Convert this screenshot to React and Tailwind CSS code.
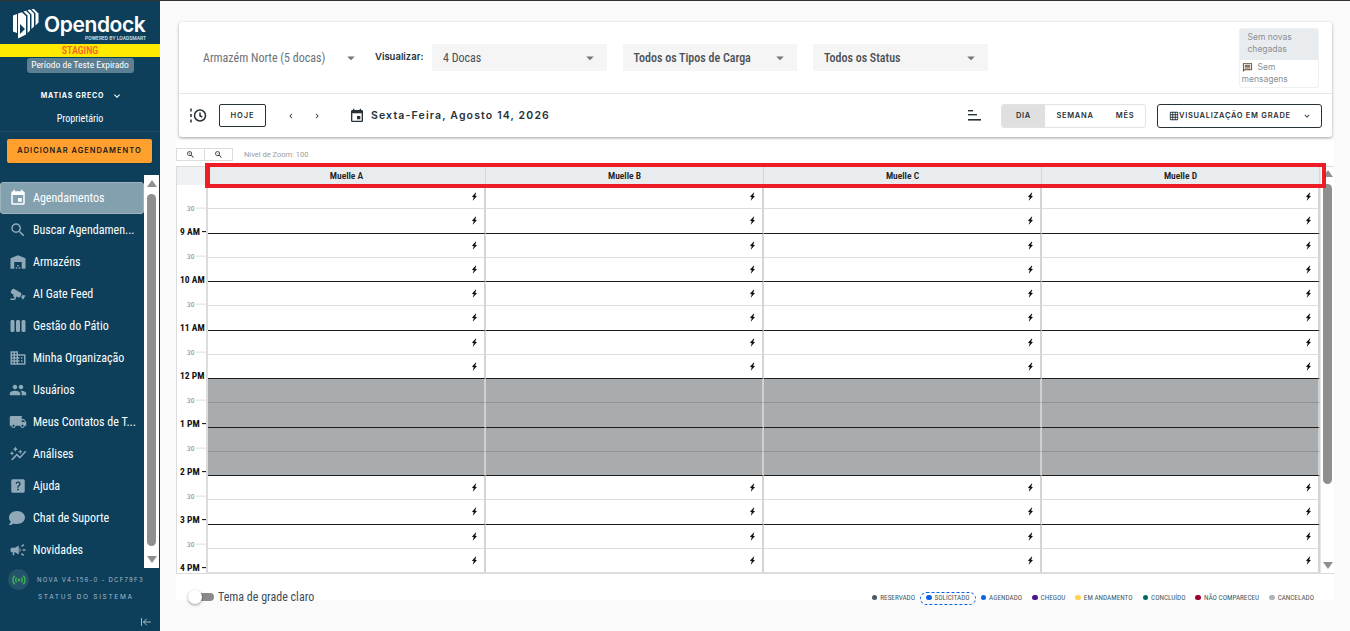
import React from 'react';
import {
  MdEvent, MdSearch, MdWarehouse, MdViewWeek, MdDomain, MdPeople, MdLocalShipping, MdAutoGraph,
  MdHelpCenter, MdCampaign, MdSensors, MdBolt, MdArrowDropDown, MdExpandMore,
  MdChevronLeft, MdChevronRight, MdOutlineMessage, MdGridOn, MdZoomIn, MdZoomOut,
} from 'react-icons/md';
import { FaComment } from 'react-icons/fa';
import { ArrowLeftToLine } from 'lucide-react';

const CctvIcon = ({ size = 20, className = '' }) => (
  <svg width={size} height={size} viewBox="0 0 24 24" fill="currentColor" className={className}>
    <path d="M18.15,4.94C17.77,4.91 17.37,5 17,5.2L8.35,10.2C7.39,10.76 7.07,12 7.62,12.94L9.12,15.53C9.67,16.5 10.89,16.82 11.85,16.27L13.65,15.23C13.92,15.69 14.32,16.06 14.81,16.27V18.04C14.81,19.13 15.7,20 16.81,20H22V18.04H16.81V16.27C17.72,15.87 18.31,14.97 18.31,14C18.31,13.54 18.19,13.11 17.97,12.73L20.65,11.19C21.6,10.64 21.93,9.42 21.38,8.46L19.88,5.87C19.5,5.25 18.85,4.97 18.15,4.94M6.22,13.17L2,13.89L2.75,15.19L4.5,18.22L5.25,19.5L7.97,16.25L6.22,13.17Z" />
  </svg>
);

const HistoryIcon = () => (
  <svg width="17" height="17" viewBox="0 0 17 17" fill="none" stroke="#263238" strokeWidth="1.5">
    <path d="M1 1.5V4.5M1 7V10M1 12.5V15.5" />
    <circle cx="10" cy="8.5" r="5.5" />
    <path d="M10 5.5V8.7L12.2 10" />
  </svg>
);

const Logo = () => (
  <svg width="26" height="30" viewBox="0 0 26 30" fill="white" className="shrink-0">
    <path d="M0 6.5 L4 5 V24 L0 22.5 Z" />
    <path d="M5 4.6 L9 3.2 L13 7.2 V25.5 L5 29.5 Z M7 15 V25 L12 20 Z" fillRule="evenodd" />
    <path d="M10.5 2.6 L13 1.8 L17 5.8 V21.5 L14.5 24 V6.6 Z" />
    <path d="M14.5 1.3 L17 0.5 L21 4.5 V17.5 L18.5 20 V5.4 Z" />
    <path d="M18.5 0.2 L21 0 L25.5 4.5 V13.5 L22.5 16.5 V4.2 Z" />
  </svg>
);

const menuItems = [
  { label: 'Agendamentos', icon: MdEvent, active: true },
  { label: 'Buscar Agendamen...', icon: MdSearch },
  { label: 'Armazéns', icon: MdWarehouse },
  { label: 'AI Gate Feed', icon: CctvIcon, flip: true },
  { label: 'Gestão do Pátio', icon: MdViewWeek },
  { label: 'Minha Organização', icon: MdDomain },
  { label: 'Usuários', icon: MdPeople },
  { label: 'Meus Contatos de T...', icon: MdLocalShipping },
  { label: 'Análises', icon: MdAutoGraph },
  { label: 'Ajuda', icon: MdHelpCenter },
  { label: 'Chat de Suporte', icon: FaComment },
  { label: 'Novidades', icon: MdCampaign },
];

const legend = [
  ['RESERVADO', 'bg-[#455a64]'],
  ['SOLICITADO', 'bg-[#0b63e5]'],
  ['AGENDADO', 'bg-[#0b63e5]'],
  ['CHEGOU', 'bg-[#4a148c]'],
  ['EM ANDAMENTO', 'bg-[#ffd54f]'],
  ['CONCLUÍDO', 'bg-[#00695c]'],
  ['NÃO COMPARECEU', 'bg-[#a00030]'],
  ['CANCELADO', 'bg-[#b0b3b8]'],
];

const docks = ['Muelle A', 'Muelle B', 'Muelle C', 'Muelle D'];

const rows = ['30', '9 AM', '30', '10 AM', '30', '11 AM', '30', '12 PM', '30', '1 PM', '30', '2 PM', '30', '3 PM', '30', '4 PM'];

const Select = ({ label, bold }) => (
  <div className={`flex items-center justify-between w-[174.5px] h-[27px] bg-[#f5f5f5] pl-[11px] pr-[8px] text-[12px] text-[#4a4f55] whitespace-nowrap font-stretch-condensed ${bold ? 'font-medium' : ''}`}>
    <span>{label}</span>
    <MdArrowDropDown size={18} className="text-[#757575]" />
  </div>
);

const Sidebar = () => (
  <aside className="w-[160px] shrink-0 bg-[#0d3f5b] flex flex-col text-white">
    <div className="h-[43px] flex pl-[13px] pt-[8px] gap-[5px]">
      <Logo />
      <div className="flex flex-col pt-[5px] w-[102px]">
        <span className="text-[21px] leading-[22px] font-semibold font-['Inter',sans-serif] tracking-[-0.4px] whitespace-nowrap">Opendock</span>
        <span className="text-[5px] leading-[5px] self-end text-[#dfe6ea] font-medium whitespace-nowrap">POWERED BY LOADSMART</span>
      </div>
    </div>
    <div className="h-[13px] bg-[#ffea00] flex items-center justify-center text-[10px] font-medium font-stretch-condensed text-[#f5602c]">STAGING</div>
    <div className="self-center mt-[1px] h-[15px] w-[107px] bg-[#5b7f93] rounded-[3px] flex items-center justify-center text-[9.5px] whitespace-nowrap font-stretch-condensed text-white">Período de Teste Expirado</div>
    <div className="mt-[17px] flex items-center justify-center gap-[7px] h-[12px] text-[7px] font-bold tracking-[0.8px] font-['Inter',sans-serif] pl-[4px] whitespace-nowrap">
      MATIAS GRECO <MdExpandMore size={12} />
    </div>
    <div className="mt-[10px] h-[12px] flex items-center justify-center text-[10px] font-stretch-condensed">Proprietário</div>
    <div className="mt-[7px] border-b border-[#1c4a64]" />
    <button className="mx-[7px] mt-[7px] h-[24px] w-[145px] shrink-0 bg-[#ffa02e] rounded-[2px] shadow text-[#1b1b1b] text-[7.5px] font-semibold tracking-[1px] font-['Inter',sans-serif] whitespace-nowrap">
      ADICIONAR AGENDAMENTO
    </button>
    <div className="mt-[12px] h-[393px] flex">
      <nav className="w-[144px] pt-[7px] flex flex-col">
        {menuItems.map(({ label, icon: Icon, active, flip }) => (
          <div
            key={label}
            className={`h-[32px] shrink-0 flex items-center gap-[6px] text-[12px] whitespace-nowrap font-stretch-condensed ${active ? 'bg-[#83a0ae] border border-[#9db3be] rounded-[3px] pl-[8px]' : 'pl-[9px]'}`}
          >
            <Icon size={label === 'Chat de Suporte' ? 16 : 18} className={`shrink-0 ${active ? 'text-white' : 'text-[#8fa9b8]'} ${flip ? '-scale-x-100' : ''}`} />
            <span className={label === 'Chat de Suporte' ? 'ml-[2px]' : ''}>{label}</span>
          </div>
        ))}
      </nav>
      <div className="w-[15px] bg-white flex flex-col items-center pt-[5px] pb-[5px]">
        <div className="w-0 h-0 border-x-[5px] border-x-transparent border-b-[7px] border-b-[#8f8f8f]" />
        <div className="w-[9px] flex-1 bg-[#8f8f8f] rounded-full mt-[7px] mb-[10px]" />
        <div className="w-0 h-0 border-x-[5px] border-x-transparent border-t-[7px] border-t-[#8f8f8f]" />
      </div>
    </div>
    <div className="flex items-center pl-[8px] mt-[1px] gap-[8px] h-[21px]">
      <div className="w-[21px] h-[21px] rounded-full bg-[#25526b] flex items-center justify-center">
        <MdSensors size={16} className="text-[#3fb950]" />
      </div>
      <span className="text-[6px] tracking-[1.25px] text-[#a9bcc8] font-['Inter',sans-serif] whitespace-nowrap">NOVA V4-156-0 - DCF79F3</span>
    </div>
    <div className="mt-[3px] pl-[38px] text-[6.5px] tracking-[1.7px] text-[#a9bcc8] font-['Inter',sans-serif] whitespace-nowrap">STATUS DO SISTEMA</div>
    <div className="mt-[13px] pl-[140px]">
      <ArrowLeftToLine size={12} className="text-[#a9bcc8]" />
    </div>
  </aside>
);

const Toolbar = () => (
  <div className="w-[1153px] h-[115px] ml-[2px] bg-white rounded-[3px] shadow-[0_1px_3px_rgba(0,0,0,0.35)] flex flex-col">
    <div className="h-[72px] border-b border-[#e6e6e6] flex">
      <div className="flex items-center h-[72px] pb-[1px] pl-[24px]">
        <div className="w-[157px] flex items-center justify-between text-[12px] text-[#6b7278] whitespace-nowrap font-stretch-condensed">
          <span>Armazém Norte (5 docas)</span>
          <MdArrowDropDown size={18} className="text-[#757575]" />
        </div>
        <span className="ml-[15px] w-[48px] text-[9.5px] font-semibold text-[#263238] font-['Inter',sans-serif] whitespace-nowrap">Visualizar:</span>
        <div className="ml-[9px]"><Select label="4 Docas" /></div>
        <div className="ml-[16px]"><Select label="Todos os Tipos de Carga" bold /></div>
        <div className="ml-[16px]"><Select label="Todos os Status" bold /></div>
      </div>
      <div className="ml-[251px] mt-[6px] w-[80px] h-[60px] rounded-[3px] border border-[#eef0f2] text-[8.5px] leading-[12px] text-[#8a8f94] font-['Inter',sans-serif]">
        <div className="h-[31px] bg-[#e9ecef] px-[8px] pt-[2px]">Sem novas chegadas</div>
        <div className="px-[2px] pt-[1px]">
          <MdOutlineMessage size={11} className="inline mr-[5px] text-[#5d4b2a]" />
          Sem mensagens
        </div>
      </div>
    </div>
    <div className="flex-1 flex items-center pl-[11px] font-['Inter',sans-serif] text-[#263238]">
      <HistoryIcon />
      <button className="ml-[12px] w-[47px] h-[23px] border border-[#263238] rounded-[2px] text-[7.5px] font-semibold tracking-[1px]">HOJE</button>
      <MdChevronLeft size={10} className="ml-[20px] text-[#333]" />
      <MdChevronRight size={10} className="ml-[16px] text-[#333]" />
      <MdEvent size={16} className="ml-[27px]" />
      <span className="ml-[6px] w-[597px] text-[10.5px] font-semibold tracking-[1.15px] whitespace-nowrap">Sexta-Feira, Agosto 14, 2026</span>
      <svg width="14" height="12" viewBox="0 0 14 12" className="mr-[19px]">
        <rect x="0" y="0" width="5" height="1.4" fill="#263238" />
        <rect x="0" y="4" width="9" height="1.4" fill="#263238" />
        <rect x="0" y="9" width="13" height="1.6" fill="#263238" />
      </svg>
      <div className="flex h-[24px] w-[145px] border border-[#e3e3e3] rounded-[3px] text-[7.5px] font-semibold tracking-[0.7px]">
        <div className="w-[43px] bg-[#e0e0e0] flex items-center justify-center">DIA</div>
        <div className="w-[60px] flex items-center justify-center">SEMANA</div>
        <div className="w-[40px] flex items-center justify-center">MÊS</div>
      </div>
      <button className="ml-[11px] w-[165px] h-[24px] border border-[#263238] rounded-[3px] flex items-center pl-[11px] text-[7.5px] font-semibold tracking-[0.7px] whitespace-nowrap">
        <MdGridOn size={10} />VISUALIZAÇÃO EM GRADE
        <MdExpandMore size={10} className="ml-[11px]" />
      </button>
    </div>
  </div>
);

const Grid = () => (
  <div className="relative mt-[5px]">
    <div className="flex border-t border-l border-b border-[#dcdcdc] h-[408px] overflow-hidden">
      <div className="w-[1143px] shrink-0">
        <div className="grid grid-cols-[31px_repeat(4,278px)] h-[18px] bg-[#e9ecef] text-[9.5px] font-semibold text-[#222] font-stretch-condensed">
          <div className="bg-[#f0f1f3] border-r-2 border-[#dcdcdc]" />
          {docks.map((d) => (
            <div key={d} className="flex items-center justify-center border-r border-[#d4d6d8]">{d}</div>
          ))}
        </div>
        <div className="flex">
          {/* labels sit on a 24px step, the rows on 24.25px, same as the app */}
          <div className="w-[31px] shrink-0 border-r-2 border-[#dcdcdc]">
            {rows.map((label, i) => {
              const hour = label !== '30';
              return (
                <div key={i} className="h-[24px] flex items-end">
                  <span className={`w-full translate-y-[calc(50%-1px)] flex items-center whitespace-nowrap font-stretch-condensed ${hour ? 'pl-[3px] text-[9.5px] font-bold text-[#111]' : 'pl-[10px] text-[7.5px] text-[#8a8a8a]'}`}>
                    {label}
                    <span className={`flex-1 h-[1px] ml-[2px] ${hour ? 'bg-black' : 'bg-[#dcdcdc]'}`} />
                  </span>
                </div>
              );
            })}
          </div>
          <div className="flex-1">
            {rows.map((label, i) => {
              const blocked = i >= 8 && i <= 11;
              const hour = label !== '30' && i < rows.length - 1;
              return (
                <div key={i} className="grid grid-cols-4 h-[24.25px]">
                  {docks.map((d) => (
                    <div
                      key={d}
                      className={`flex items-center justify-end pr-[4px] border-r-2 ${blocked ? 'bg-[#a9acae] border-r-[#d0d0d0]' : 'border-r-[#d4d4d4]'} border-b ${
                        hour ? 'border-b-[#1c1c1c]' : blocked ? 'border-b-[#919497]' : 'border-b-[#dcdcdc]'
                      }`}
                    >
                      {!blocked && <MdBolt size={11} className="text-[#111] rotate-12" />}
                    </div>
                  ))}
                </div>
              );
            })}
          </div>
        </div>
      </div>
      <div className="w-[14px] border-l border-[#e6e6e6] flex flex-col items-center pt-[3px] pb-[4px]">
        <div className="w-0 h-0 border-x-[5px] border-x-transparent border-b-[7px] border-b-[#8f8f8f]" />
        <div className="w-[9px] h-[300px] bg-[#8f8f8f] rounded-full mt-[7px]" />
        <div className="mt-auto w-0 h-0 border-x-[5px] border-x-transparent border-t-[7px] border-t-[#8f8f8f]" />
      </div>
    </div>
    <div className="absolute left-[29px] top-[-3px] w-[1121px] h-[25px] border-[4px] border-l-[5px] border-[#ee1c25] pointer-events-none" />
  </div>
);

const Footer = () => (
  <div className="h-[26px] flex items-end justify-between pl-[12px] pr-[20px]">
    <div className="flex items-center gap-[4px] mb-[-6px]">
      <div className="relative w-[26px] h-[14px] flex items-center">
        <div className="ml-[6px] w-[20px] h-[8px] rounded-full bg-[#8a8a8a]" />
        <div className="absolute left-0 w-[14px] h-[14px] rounded-full bg-white shadow-[0_1px_3px_rgba(0,0,0,0.4)]" />
      </div>
      <span className="text-[12px] text-[#3d4b5c] font-stretch-condensed">Tema de grade claro</span>
    </div>
    <div className="flex items-center gap-[10px] mb-[-5px]">
      {legend.map(([label, dot]) => (
        <div
          key={label}
          className={`flex items-center gap-[3px] text-[7.2px] text-[#455a64] font-stretch-condensed whitespace-nowrap ${label === 'SOLICITADO' ? 'border border-dashed border-[#0b63e5] rounded-full h-[13px] px-[5px] -mx-[5px]' : ''}`}
        >
          <span className={`w-[5.5px] h-[5.5px] rounded-full -translate-y-[1px] ${dot}`} />
          {label}
        </div>
      ))}
    </div>
  </div>
);

export default function App() {
  return (
    <div className="h-screen w-[1350px] overflow-hidden flex flex-col bg-[#fafafa] font-['Roboto',sans-serif]">
      <div className="h-[1px] bg-[#333] shrink-0" />
      <div className="flex flex-1 min-h-0">
        <Sidebar />
        <main className="flex-1 pl-[16px] pt-[21px]">
          <div className="pl-[1px]"><Toolbar /></div>
          <div className="mt-[3px] w-[1158px] bg-white">
            <div className="pt-[8px] flex items-center h-[21px]">
              <div className="flex w-[57px] h-[13px] border border-[#dcdcdc]">
                <div className="flex-1 flex items-center justify-center border-r border-[#dcdcdc]"><MdZoomIn size={9} className="text-[#222]" /></div>
                <div className="flex-1 flex items-center justify-center"><MdZoomOut size={9} className="text-[#222]" /></div>
              </div>
              <span className="ml-[11px] text-[7.5px] text-[#9a9a9a]">Nível de Zoom: 100</span>
            </div>
            <Grid />
            <Footer />
          </div>
        </main>
      </div>
    </div>
  );
}
